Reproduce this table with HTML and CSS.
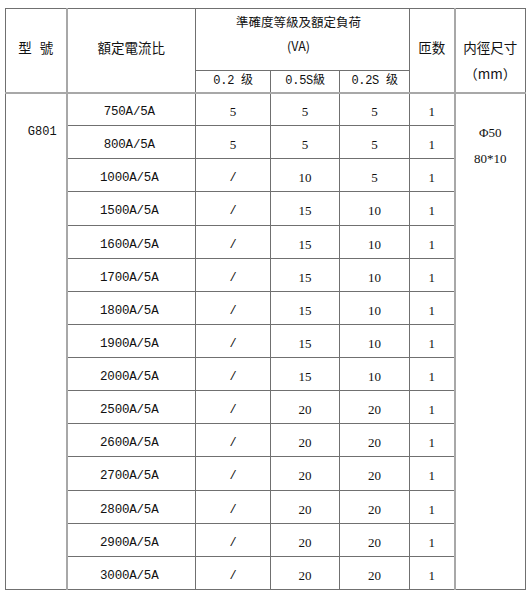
FILE: index.html
```html
<!DOCTYPE html>
<html lang="zh-Hant">
<head>
<meta charset="utf-8">
<title>G801 規格表</title>
<link rel="stylesheet" href="styles.css">
</head>
<body>
<table class="spec">
  <colgroup>
    <col class="c-model"><col class="c-ratio"><col class="c-a"><col class="c-b"><col class="c-c"><col class="c-turns"><col class="c-size">
  </colgroup>
  <thead>
    <tr class="h1">
      <th rowspan="2" class="hd hd-model">型 號</th>
      <th rowspan="2" class="hd hd-ratio">額定電流比</th>
      <th colspan="3" class="hd-acc">準確度等級及額定負荷<br>(VA)</th>
      <th rowspan="2" class="hd hd-turns">匝数</th>
      <th rowspan="2" class="hd hd-size">内徑尺寸<br>（mm）</th>
    </tr>
    <tr class="h2">
      <th class="sub">0.2 级</th>
      <th class="sub">0.5S級</th>
      <th class="sub">0.2S 级</th>
    </tr>
  </thead>
  <tbody>
    <tr><td rowspan="15" class="model">G801</td><td class="ratio">750A/5A</td><td class="num">5</td><td class="num">5</td><td class="num">5</td><td class="num">1</td><td rowspan="15" class="size">Φ50<br>80*10</td></tr>
    <tr><td class="ratio">800A/5A</td><td class="num">5</td><td class="num">5</td><td class="num">5</td><td class="num">1</td></tr>
    <tr><td class="ratio">1000A/5A</td><td class="slash">/</td><td class="num">10</td><td class="num">5</td><td class="num">1</td></tr>
    <tr><td class="ratio">1500A/5A</td><td class="slash">/</td><td class="num">15</td><td class="num">10</td><td class="num">1</td></tr>
    <tr><td class="ratio">1600A/5A</td><td class="slash">/</td><td class="num">15</td><td class="num">10</td><td class="num">1</td></tr>
    <tr><td class="ratio">1700A/5A</td><td class="slash">/</td><td class="num">15</td><td class="num">10</td><td class="num">1</td></tr>
    <tr><td class="ratio">1800A/5A</td><td class="slash">/</td><td class="num">15</td><td class="num">10</td><td class="num">1</td></tr>
    <tr><td class="ratio">1900A/5A</td><td class="slash">/</td><td class="num">15</td><td class="num">10</td><td class="num">1</td></tr>
    <tr><td class="ratio">2000A/5A</td><td class="slash">/</td><td class="num">15</td><td class="num">10</td><td class="num">1</td></tr>
    <tr><td class="ratio">2500A/5A</td><td class="slash">/</td><td class="num">20</td><td class="num">20</td><td class="num">1</td></tr>
    <tr><td class="ratio">2600A/5A</td><td class="slash">/</td><td class="num">20</td><td class="num">20</td><td class="num">1</td></tr>
    <tr><td class="ratio">2700A/5A</td><td class="slash">/</td><td class="num">20</td><td class="num">20</td><td class="num">1</td></tr>
    <tr><td class="ratio">2800A/5A</td><td class="slash">/</td><td class="num">20</td><td class="num">20</td><td class="num">1</td></tr>
    <tr><td class="ratio">2900A/5A</td><td class="slash">/</td><td class="num">20</td><td class="num">20</td><td class="num">1</td></tr>
    <tr><td class="ratio">3000A/5A</td><td class="slash">/</td><td class="num">20</td><td class="num">20</td><td class="num">1</td></tr>
  </tbody>
</table>
</body>
</html>
```

FILE: styles.css
```css
html, body {
  margin: 0;
  background: #ffffff;
}

body {
  padding: 8px 0 0 5px;
  font-family: "Noto Sans CJK TC", "Noto Sans CJK SC", sans-serif;
  color: #111;
}

.spec {
  border-collapse: collapse;
  table-layout: fixed;
  width: 520px;
  border: 1px solid #555;
}

.c-model { width: 61px; }
.c-ratio { width: 129px; }
.c-a { width: 75px; }
.c-b { width: 69px; }
.c-c { width: 70px; }
.c-turns { width: 45px; }
.c-size { width: 71px; }

.spec th,
.spec td {
  border: 1px solid #707070;
  padding: 0;
  text-align: center;
  font-weight: normal;
}

.spec .h1 { height: 62px; }
.spec .h2 { height: 22px; }
.spec tbody tr { height: 33.13px; }

.spec .hd {
  vertical-align: top;
  padding-top: 25px;
  font-size: 13.5px;
  line-height: 26px;
  border-bottom: 2px solid #a8a8a8;
}

.spec .hd-model {
  word-spacing: 5px;
  border-right: 2px solid #a8a8a8;
}

.spec .hd-size {
  border-left: 2px solid #a8a8a8;
}

.spec .hd-acc {
  vertical-align: top;
  padding: 1px 8px 0 0;
  font-size: 12.5px;
  line-height: 24px;
}

.spec .sub {
  font-family: "Liberation Mono", "Noto Sans CJK SC", monospace;
  font-size: 12px;
  line-height: 20px;
  letter-spacing: -0.3px;
  border-bottom: 2px solid #a8a8a8;
}

.spec td {
  vertical-align: middle;
  padding-top: 6px;
  line-height: 16px;
}

.spec .model {
  font-family: "Liberation Mono", monospace;
  font-size: 12px;
  vertical-align: top;
  padding: 25px 0 0 13px;
  line-height: 26px;
  border-right: 2px solid #a8a8a8;
}

.spec .ratio {
  font-family: "Liberation Mono", monospace;
  font-size: 12.5px;
  letter-spacing: -0.2px;
  padding-right: 4px;
}

.spec .slash {
  font-family: "Liberation Mono", monospace;
  font-size: 12px;
}

.spec .num {
  font-family: "Liberation Serif", serif;
  font-size: 13px;
}

.spec .size {
  font-family: "Liberation Serif", serif;
  font-size: 13px;
  vertical-align: top;
  padding-top: 26px;
  line-height: 26px;
  border-left: 2px solid #a8a8a8;
}
```
